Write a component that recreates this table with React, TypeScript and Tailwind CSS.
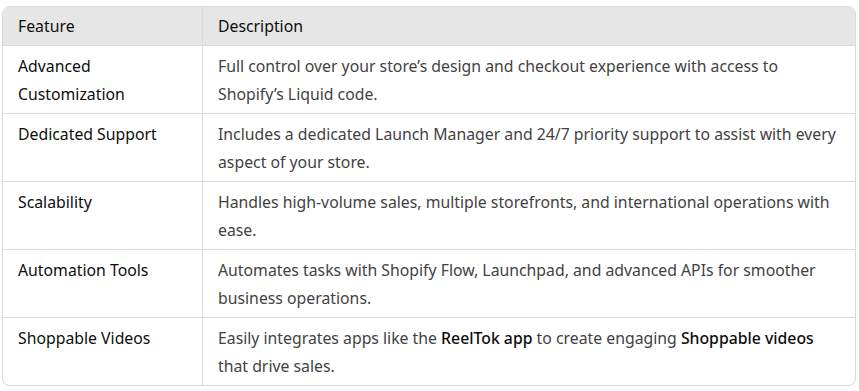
import { ReactNode } from 'react';

interface Row {
  feature: string;
  lines: ReactNode[];
}

const rows: Row[] = [
  {
    feature: 'Advanced Customization',
    lines: [
      'Full control over your store’s design and checkout experience with access to',
      'Shopify’s Liquid code.',
    ],
  },
  {
    feature: 'Dedicated Support',
    lines: [
      'Includes a dedicated Launch Manager and 24/7 priority support to assist with every',
      'aspect of your store.',
    ],
  },
  {
    feature: 'Scalability',
    lines: [
      'Handles high-volume sales, multiple storefronts, and international operations with',
      'ease.',
    ],
  },
  {
    feature: 'Automation Tools',
    lines: [
      'Automates tasks with Shopify Flow, Launchpad, and advanced APIs for smoother',
      'business operations.',
    ],
  },
  {
    feature: 'Shoppable Videos',
    lines: [
      <>
        Easily integrates apps like the{' '}
        <strong className="font-medium text-[#0d0d0d]">ReelTok app</strong> to create
        engaging <strong className="font-medium text-[#0d0d0d]">Shoppable videos</strong>
      </>,
      'that drive sales.',
    ],
  },
];

export default function App() {
  return (
    <div className="bg-white w-[859px] h-[391px] pt-[6px] pl-[2px] font-['Noto_Sans',sans-serif] text-[15.8px] leading-[28px]">
      <div className="w-[854px] border border-[#d9d9d9] rounded-[8px] overflow-hidden">
        <div className="flex bg-[#e6e6e6] text-[#0d0d0d] border-b border-[#d9d9d9]">
          <div className="w-[200px] shrink-0 border-r border-[#d9d9d9] px-[15px] py-[5px]">
            Feature
          </div>
          <div className="flex-1 px-[15px] py-[5px]">Description</div>
        </div>
        {rows.map((row, i) => (
          <div
            key={row.feature}
            className={`flex ${i < rows.length - 1 ? 'border-b border-[#d9d9d9]' : ''}`}
          >
            <div className="w-[200px] shrink-0 border-r border-[#d9d9d9] px-[15px] pt-[6px] pb-[5px] text-[#0d0d0d]">
              {row.feature}
            </div>
            <div className="flex-1 px-[15px] pt-[6px] pb-[5px] text-[#424242]">
              {row.lines.map((line, j) => (
                <div key={j} className="whitespace-nowrap">
                  {line}
                </div>
              ))}
            </div>
          </div>
        ))}
      </div>
    </div>
  );
}
